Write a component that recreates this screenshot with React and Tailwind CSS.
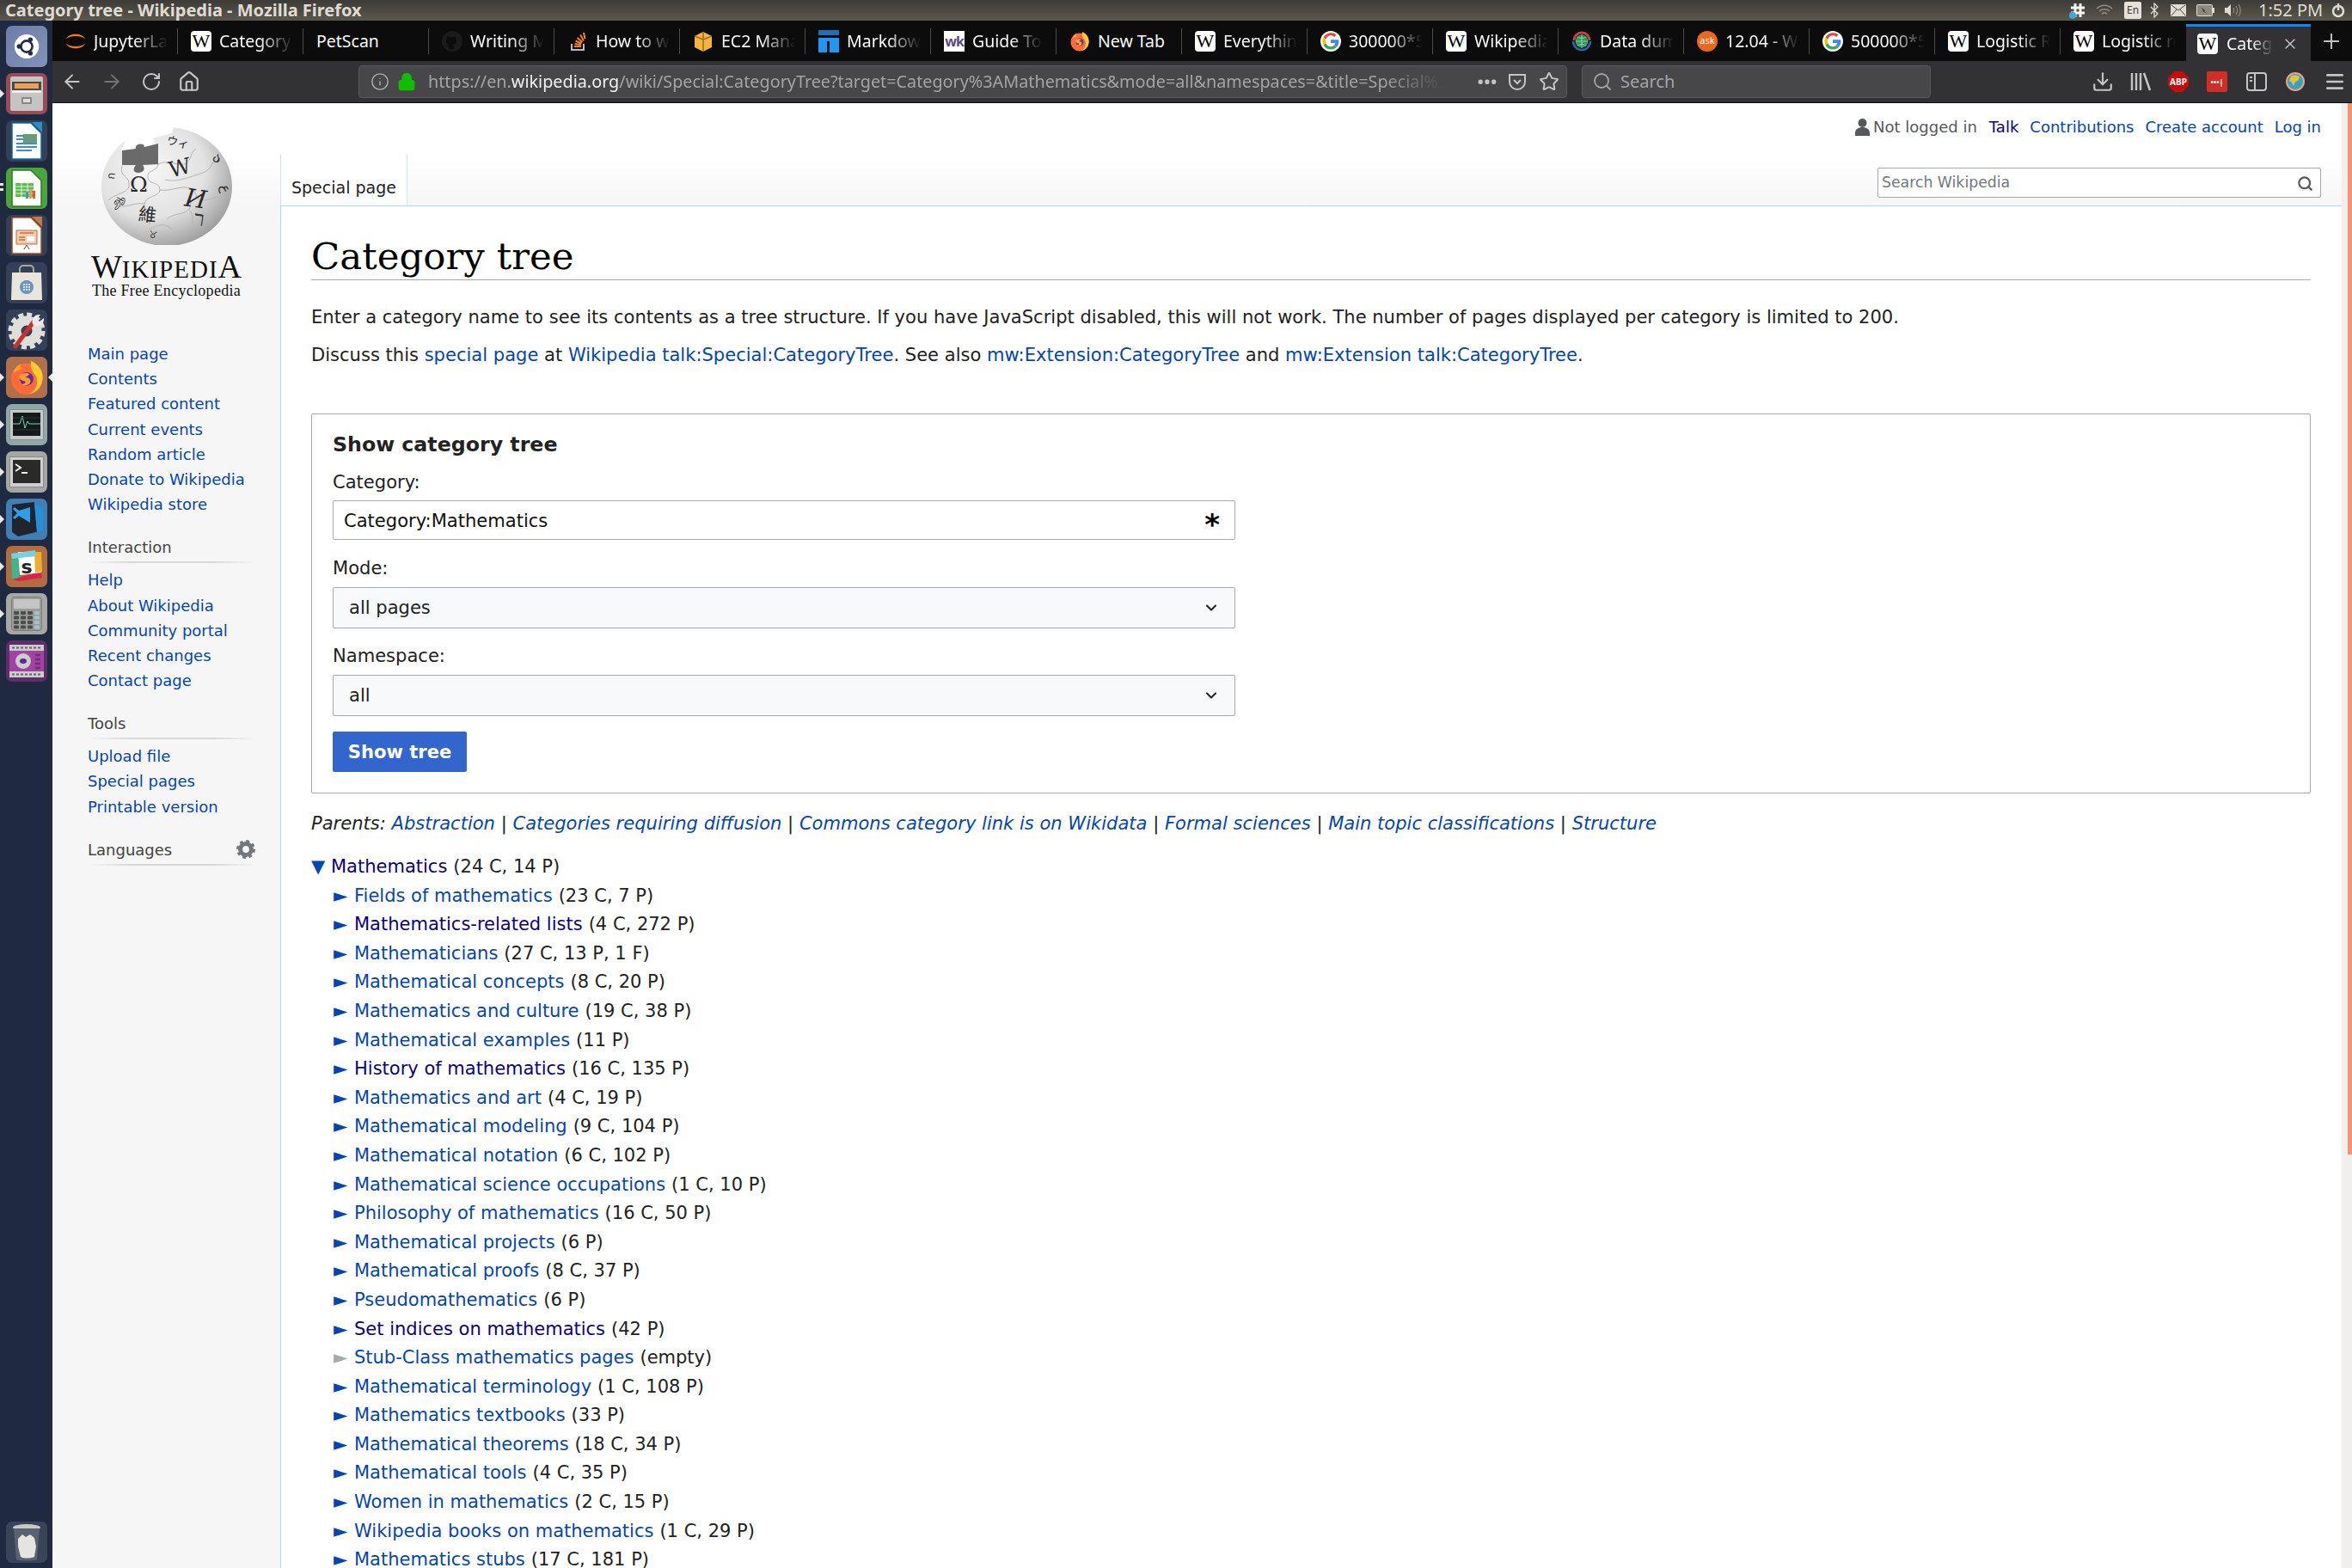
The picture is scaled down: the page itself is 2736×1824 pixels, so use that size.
import React from 'react';
import { ArrowLeft, ArrowRight, RotateCw, Home, Search, X, Plus, Menu, Star, ChevronDown, Info, Lock, Download } from 'lucide-react';

const WikiIcon = () => (
  <div className="w-6 h-6 shrink-0 rounded-[4px] bg-white flex items-center justify-center font-['Liberation_Serif',serif] text-[22px] leading-none text-black">W</div>
);

const GoogleIcon = () => (
  <svg width="24" height="24" viewBox="0 0 24 24" className="shrink-0">
    <circle cx="12" cy="12" r="12" fill="#fff" />
    <path d="M12 5.2c1.8 0 3.2.7 4.2 1.7l2.3-2.3A9.6 9.6 0 0 0 3.6 7.5l2.8 2.1A6 6 0 0 1 12 5.2z" fill="#ea4335" />
    <path d="M3.6 7.5a9.6 9.6 0 0 0 0 9l2.8-2.2a6 6 0 0 1 0-4.7z" fill="#fbbc05" />
    <path d="M12 21.6c2.6 0 4.8-.9 6.4-2.4l-2.7-2.1c-.9.6-2.2 1.1-3.7 1.1a6 6 0 0 1-5.6-3.9l-2.8 2.2a9.6 9.6 0 0 0 8.4 5.1z" fill="#34a853" />
    <path d="M21.4 12.2c0-.7-.1-1.3-.2-2H12v3.8h5.3c-.2 1.2-.9 2.3-1.6 3.1l2.7 2.1c1.9-1.7 3-4.2 3-7z" fill="#4285f4" />
  </svg>
);

const FirefoxIcon = ({ size = 24 }) => (
  <svg width={size} height={size} viewBox="0 0 24 24" className="shrink-0">
    <circle cx="12" cy="13" r="10.5" fill="#ff6a39" />
    <path d="M15 1c6 3 8.500 8 7.500 13-1 5-4 8-8.500 9 5-3 6-8 4-12-1-2-2.500-3-3-5-.3-1.500-.3-3.500 0-5z" fill="#ffcb2e" />
    <path d="M3 9c1-3 3-5 5-6-.5 1.500 0 2.500 1 3-2 1-4 2-6 3z" fill="#ffa030" />
    <circle cx="12" cy="13" r="4.500" fill="#5b2fa8" />
    <path d="M7 11c2-2 5-2.500 7-1l-3 2c2 0 4 1 3.500 3-.5 2.500-4 3-6 1.500 2 0 3-1 2.500-2-2 0-4-1.500-4-3.500z" fill="#ff9f2e" />
  </svg>
);

const JupyterIcon = () => (
  <svg width="24" height="24" viewBox="0 0 24 24" className="shrink-0">
    <path d="M1 9c3-7 19-7 22 0-5-4-17-4-22 0zM1 15c3 7 19 7 22 0-5 4-17 4-22 0z" fill="#f37726" />
  </svg>
);

const StackIcon = () => (
  <svg width="24" height="24" viewBox="0 0 24 24" className="shrink-0">
    <path d="M5 15v7h14v-7" fill="none" stroke="#bbb" strokeWidth="2" />
    <path d="M8 18h8M8.500 15l7.500 1M9.500 11.500l7 3M11.500 8l6 5M15 4.500l4 7M19 2l1.500 7" fill="none" stroke="#f48024" strokeWidth="2" />
  </svg>
);

const BoxIcon = () => (
  <svg width="24" height="24" viewBox="0 0 24 24" className="shrink-0">
    <path d="M2 6l10-5 10 5v13l-10 5-10-5z" fill="#f3b53f" />
    <path d="M12 1v23M2 6l10 4 10-4" fill="none" stroke="#9a6c1c" strokeWidth="1.500" />
  </svg>
);

const BlueTable = () => (
  <svg width="24" height="26" viewBox="0 0 24 26" className="shrink-0">
    <rect x="0" y="0" width="24" height="6" fill="#1d6fb8" />
    <rect x="0" y="9" width="24" height="4" fill="#2196f3" />
    <rect x="0" y="13" width="10" height="13" fill="#2196f3" />
    <rect x="13" y="13" width="11" height="13" fill="#2196f3" />
  </svg>
);

const WkIcon = () => (
  <div className="w-6 h-6 shrink-0 bg-white flex items-center justify-center text-[16px] font-bold text-[#5a4a7a] font-['Noto_Sans',sans-serif] tracking-[-1px]">wk</div>
);

const GithubIcon = () => (
  <svg width="24" height="24" viewBox="0 0 24 24" className="shrink-0">
    <circle cx="12" cy="12" r="12" fill="#1b1b1c" />
    <path d="M8 21v-3c-3 .5-3.500-1-4-2 2 .5 2.500 1.500 4 1.500.2-.8.5-1.300 1-1.500-3-.5-4-2-4-4.500 0-1.200.4-2 1-2.700-.2-.7-.2-1.700.2-2.500 1 0 1.800.5 2.500 1 1.600-.4 3-.4 4.600 0 .7-.5 1.500-1 2.500-1 .4.800.4 1.800.2 2.500.6.700 1 1.500 1 2.700 0 2.500-1 4-4 4.500.6.500 1 1.200 1 2.200V21z" fill="#0c0c0d" />
  </svg>
);

const WikimediaIcon = () => (
  <svg width="24" height="26" viewBox="0 0 24 26" className="shrink-0">
    <path d="M3 12a9 9 0 0 1 18 0" fill="none" stroke="#c8403a" strokeWidth="3" />
    <circle cx="12" cy="13" r="7.500" fill="#2f9a5e" />
    <path d="M5 13h14M12 5v16M7 8c3 2 7 2 10 0M7 18c3-2 7-2 10 0" stroke="#a4dcc0" strokeWidth="0.800" fill="none" />
    <path d="M2 13a10 10 0 0 0 20 0" fill="none" stroke="#2a6aa8" strokeWidth="2.500" />
  </svg>
);

const AskIcon = () => (
  <div className="relative w-6 h-6 shrink-0 rounded-full bg-[#e8681e] flex items-center justify-center text-[11px] text-white font-['Noto_Sans',sans-serif]">ask</div>
);

const tabs = [
  { title: 'JupyterLab', icon: <JupyterIcon /> },
  { title: 'Category tree', icon: <WikiIcon /> },
  { title: 'PetScan', short: true },
  { title: 'Writing Math', icon: <GithubIcon /> },
  { title: 'How to write', icon: <StackIcon /> },
  { title: 'EC2 Manage', icon: <BoxIcon /> },
  { title: 'Markdown', icon: <BlueTable /> },
  { title: 'Guide To', icon: <WkIcon /> },
  { title: 'New Tab', icon: <FirefoxIcon />, short: true },
  { title: 'Everything', icon: <WikiIcon /> },
  { title: '300000*500', icon: <GoogleIcon /> },
  { title: 'Wikipedia', icon: <WikiIcon /> },
  { title: 'Data dumps', icon: <WikimediaIcon /> },
  { title: '12.04 - What', icon: <AskIcon /> },
  { title: '500000*500', icon: <GoogleIcon /> },
  { title: 'Logistic Reg', icon: <WikiIcon /> },
  { title: 'Logistic reg', icon: <WikiIcon /> },
];

const Tile = ({ bg, children, pipLeft, pipRight, two }) => (
  <div className="relative w-[61px] h-12 shrink-0 flex justify-center">
    {pipLeft && (
      <div className="absolute left-0 top-[19px] w-0 h-0 border-y-[5px] border-y-transparent border-l-[5px] border-l-[#e8e8e8]" />
    )}
    {two && (
      <div className="absolute left-0 top-[18px] flex flex-col gap-[3px]">
        <div className="w-1 h-[3px] bg-[#e8e8e8]" />
        <div className="w-1 h-[3px] bg-[#e8e8e8]" />
      </div>
    )}
    {pipRight && (
      <div className="absolute right-0 top-[19px] w-0 h-0 border-y-[5px] border-y-transparent border-r-[5px] border-r-[#e8e8e8]" />
    )}
    <div className={`w-12 h-12 rounded-[7px] overflow-hidden flex items-center justify-center ${bg}`}>{children}</div>
  </div>
);

const Launcher = () => (
  <div className="w-[61px] h-full shrink-0 bg-[#1f2a41] flex flex-col gap-[7px] pt-[6px] pb-[6px]">
    <Tile bg="bg-[linear-gradient(135deg,#6b7da8,#8393b8)]">
      <svg width="30" height="30" viewBox="0 0 34 34">
        <circle cx="17" cy="17" r="16" fill="#fff" />
        <circle cx="17" cy="17" r="7.500" fill="none" stroke="#222d4a" strokeWidth="3" />
        <circle cx="7" cy="17" r="3" fill="#222d4a" />
        <circle cx="22" cy="8" r="3" fill="#222d4a" />
        <circle cx="22" cy="26" r="3" fill="#222d4a" />
      </svg>
    </Tile>
    <Tile bg="bg-[#9a4a58]" pipLeft>
      <svg width="40" height="44" viewBox="0 0 40 44">
        <rect x="1" y="2" width="38" height="40" rx="2" fill="#c4c4c2" />
        <rect x="3" y="8" width="34" height="12" fill="#4a4a48" />
        <rect x="6" y="10" width="28" height="6" fill="#f0a050" />
        <rect x="3" y="18" width="34" height="3" fill="#eee" />
        <rect x="14" y="26" width="12" height="8" rx="1" fill="#888" />
        <rect x="16" y="28" width="8" height="4" fill="#ddd" />
      </svg>
    </Tile>
    <Tile bg="bg-[#343f58]">
      <svg width="36" height="44" viewBox="0 0 36 44">
        <path d="M1 1h22l12 12v30H1z" fill="#fff" stroke="#0f6a9c" strokeWidth="1.500" />
        <path d="M24 0h12v12z" fill="#2f8fc4" />
        <path d="M6 16h8M6 20h24M6 25h24M6 29h24M6 33h18" stroke="#3f8fc0" strokeWidth="2" />
        <rect x="14" y="14" width="16" height="10" fill="#6a9a7a" />
      </svg>
    </Tile>
    <Tile bg="bg-[#4aa63c]" two>
      <svg width="36" height="44" viewBox="0 0 36 44">
        <path d="M1 1h22l12 12v30H1z" fill="#fff" stroke="#2a7a24" strokeWidth="1.500" />
        <rect x="5" y="16" width="21" height="16" fill="#5dbb50" />
        <path d="M5 20h21M5 24h21M5 28h21M12 16v16M19 16v16" stroke="#fff" strokeWidth="0.800" />
        <rect x="17" y="26" width="3" height="8" fill="#3a9ad4" />
        <rect x="21" y="23" width="3" height="11" fill="#e8a040" />
        <rect x="25" y="25" width="3" height="9" fill="#d45a3a" />
      </svg>
    </Tile>
    <Tile bg="bg-[#343f58]">
      <svg width="36" height="44" viewBox="0 0 36 44">
        <path d="M1 1h22l12 12v30H1z" fill="#fff" stroke="#a04a1c" strokeWidth="1.500" />
        <path d="M24 0h12v12z" fill="#c47a4a" />
        <rect x="6" y="16" width="24" height="16" fill="#f6cdb0" stroke="#c06a3a" />
        <path d="M10 19h16M9 24h7M9 27h7" stroke="#d0683a" strokeWidth="1.500" />
        <rect x="18" y="23" width="9" height="6" fill="#fff" />
        <path d="M18 33l-3 5M18 33l3 5" stroke="#555" strokeWidth="1" />
      </svg>
    </Tile>
    <Tile bg="bg-[#343f58]">
      <svg width="38" height="44" viewBox="0 0 38 44">
        <path d="M11 12V6a4 4 0 0 1 4-4h8a4 4 0 0 1 4 4v6" fill="none" stroke="#a8a89c" strokeWidth="2" />
        <path d="M2 10h34l1 32H1z" fill="#e8e6dc" />
        <circle cx="19" cy="27" r="8" fill="#6a94c4" />
        <path d="M15 24h2M18 24h2M21 24h2M15 27h2M18 27h2M21 27h2M15 30h2M18 30h2M21 30h2" stroke="#fff" strokeWidth="1.500" />
      </svg>
    </Tile>
    <Tile bg="bg-[#343f58]">
      <svg width="46" height="46" viewBox="0 0 46 46">
        <circle cx="23" cy="24" r="19" fill="none" stroke="#dededa" strokeWidth="5" strokeDasharray="6 3.900" />
        <circle cx="23" cy="24" r="12" fill="none" stroke="#dededa" strokeWidth="11" />
        <path d="M10 42L32 12" stroke="#c8322a" strokeWidth="5" strokeLinecap="round" />
        <path d="M30 16c-2-6 2-12 9-11l-4 5 3 3 5-4c1 6-5 11-11 9z" fill="#ececea" />
      </svg>
    </Tile>
    <Tile bg="bg-[#b0704c]" pipLeft pipRight>
      <FirefoxIcon size={42} />
    </Tile>
    <Tile bg="bg-[#8fa8a6]" pipLeft>
      <svg width="40" height="36" viewBox="0 0 40 36">
        <rect x="0.500" y="0.500" width="39" height="35" fill="#c4c8c6" stroke="#8a8e8c" />
        <rect x="4" y="4" width="32" height="27" fill="#141a1a" />
        <path d="M4 17h8l3-9 3 14 3-8 2 3h13" fill="none" stroke="#6ed8b0" strokeWidth="1" />
        <path d="M4 10h32M4 24h32" stroke="#2c3434" strokeWidth="1" />
      </svg>
    </Tile>
    <Tile bg="bg-[#a6a6a4]" pipLeft>
      <svg width="40" height="36" viewBox="0 0 40 36">
        <rect x="0.500" y="0.500" width="39" height="35" fill="#cfcfcd" stroke="#8a8a88" />
        <rect x="4" y="4" width="32" height="27" fill="#2a2a28" />
        <path d="M7 9l6 4-6 4" fill="none" stroke="#eee" strokeWidth="2" />
        <path d="M14 19h7" stroke="#eee" strokeWidth="2" />
      </svg>
    </Tile>
    <Tile bg="bg-[#3f7fb6]" pipLeft>
      <svg width="40" height="42" viewBox="0 0 40 42">
        <path d="M3 4l26-3 3 35-22 5-7-5z" fill="#20242c" />
        <path d="M29 3l10 5v26l-29 7 22-5z" fill="#2590d8" />
        <path d="M24 7v18L11 17l-5 4-2-2 5-5-5-5 2-2 5 4z" fill="#2b9fe8" />
      </svg>
    </Tile>
    <Tile bg="bg-[#b46b3e]" pipLeft>
      <svg width="38" height="38" viewBox="0 0 38 38">
        <path d="M1 4l8-2 2 34-9-2z" fill="#3fb58f" />
        <path d="M2 34l8 2 27-4-1-7z" fill="#d8234f" />
        <path d="M9 2l24 0 3 24-25 3z" fill="#fff" />
        <path d="M28 2l8 0 1 23-8 1z" fill="#eab02e" />
        <path d="M1 4l28-4 1 7-28 3z" fill="#7acfe0" />
        <text x="19" y="27" textAnchor="middle" fontSize="22" fontWeight="700" fill="#222" fontFamily="DejaVu Sans">s</text>
      </svg>
    </Tile>
    <Tile bg="bg-[#a6a8a6]" pipLeft>
      <svg width="36" height="40" viewBox="0 0 36 40">
        <rect x="0.500" y="0.500" width="35" height="39" rx="3" fill="#9a9c9a" stroke="#7a7c7a" />
        <rect x="3" y="3" width="30" height="11" fill="#c4c6c4" />
        {[0, 1, 2, 3].map(r => [0, 1, 2, 3].map(c => (
          <rect key={`${r}${c}`} x={3 + c * 8} y={17 + r * 5.500} width="6" height="4" rx="1" fill={c === 3 ? '#a8c0c8' : '#4c4e4c'} />
        )))}
      </svg>
    </Tile>
    <Tile bg="bg-[#5c2f68]">
      <svg width="40" height="38" viewBox="0 0 40 38">
        <rect x="0" y="0" width="40" height="38" rx="2" fill="#a044a4" />
        <rect x="0" y="0" width="40" height="7" fill="#ccc" />
        <rect x="0" y="31" width="40" height="7" fill="#ccc" />
        <path d="M3 3.500h34M3 34.500h34" stroke="#666" strokeWidth="2" strokeDasharray="3 2" />
        <circle cx="16" cy="19" r="9" fill="#ccc" />
        <ellipse cx="16" cy="19" rx="4" ry="3" fill="#5a2a9a" />
        <path d="M30 12h6M30 17h6M30 22h6M30 27h6" stroke="#7a2a7a" strokeWidth="2.500" />
      </svg>
    </Tile>
    <div className="mt-auto">
      <Tile bg="bg-[#3a4458]">
        <svg width="34" height="44" viewBox="0 0 34 44">
          <ellipse cx="17" cy="5" rx="16" ry="4" fill="#c8c8c4" />
          <path d="M2 6l3 36c4 2 20 2 24 0l3-36" fill="#5a6272" />
          <path d="M7 18l5-5 4 3 5-3 5 4 2 10-2 12c-5 2-12 2-16 0l-3-12z" fill="#e4e4e0" />
        </svg>
      </Tile>
    </div>
  </div>
);

const TopPanel = () => (
  <div className="h-6 shrink-0 bg-[linear-gradient(#3c3b37,#5a584e)] flex items-center justify-between pl-[6px] pr-[7px] text-[#dfdbd2] font-['Noto_Sans',sans-serif]">
    <span className="text-[20px] font-bold leading-6">Category tree - Wikipedia - Mozilla Firefox</span>
    <div className="flex items-center">
      <svg width="22" height="22" viewBox="0 0 22 22">
        <path d="M8 3v16M14 3v16M3 8h16M3 14h16" stroke="#f4f4f0" strokeWidth="3" />
        <circle cx="5" cy="17" r="4" fill="#39a7e4" />
      </svg>
      <svg width="22" height="16" viewBox="0 0 22 16" className="ml-[9px]">
        <path d="M2 6c5-5 13-5 18 0M5 9c3-3 9-3 12 0M8 12c2-1.500 4-1.500 6 0" fill="none" stroke="#8c8a80" strokeWidth="1.500" />
      </svg>
      <div className="ml-[12px] w-5 h-5 rounded-[2px] bg-[#e6e2da] text-[#3c3b37] text-[12px] leading-5 text-center">En</div>
      <svg width="10" height="18" viewBox="0 0 10 18" className="ml-[10px]">
        <path d="M1 5l8 8-4 4V1l4 4-8 8" fill="none" stroke="#dfdbd2" strokeWidth="1.300" />
      </svg>
      <svg width="18" height="14" viewBox="0 0 18 14" className="ml-[14px]">
        <rect width="18" height="14" rx="1" fill="#dfdbd2" />
        <path d="M1 1l8 6 8-6M1 13l6-7M17 13l-6-7" fill="none" stroke="#4a4942" strokeWidth="1" />
      </svg>
      <svg width="22" height="14" viewBox="0 0 22 14" className="ml-[12px]">
        <rect x="0.500" y="0.500" width="18" height="13" rx="1" fill="#8c8a80" stroke="#dfdbd2" />
        <rect x="19" y="4" width="2" height="6" fill="#dfdbd2" />
        <path d="M5 3l5 4-1 1 4 3-6-3 1-1z" fill="#35342f" />
      </svg>
      <svg width="20" height="16" viewBox="0 0 20 16" className="ml-[10px]">
        <path d="M1 5h3l4-4v14l-4-4H1z" fill="#dfdbd2" />
        <path d="M11 5c1 2 1 4 0 6M14 3c2 3 2 7 0 10M17 1c3 4 3 10 0 14" fill="none" stroke="#8c8a80" strokeWidth="1.200" />
      </svg>
      <span className="ml-[20px] text-[20px] leading-6 w-[78px] whitespace-nowrap">1:52 PM</span>
      <svg width="18" height="18" viewBox="0 0 18 18" className="ml-[6px]">
        <circle cx="9" cy="10" r="6" fill="none" stroke="#dfdbd2" strokeWidth="2.500" />
        <path d="M9 1v8" stroke="#dfdbd2" strokeWidth="2.500" />
      </svg>
    </div>
  </div>
);

const TabStrip = () => (
  <div className="h-[47px] shrink-0 bg-[#0c0c0d] flex font-['Noto_Sans',sans-serif] text-[19.500px] text-[#f9f9fa]">
    {tabs.map((t, i) => (
      <div key={i} className="w-[146px] shrink-0 h-full flex items-center">
        <div className="w-[145px] h-[47px] flex items-center pl-[15px] pr-[11px] gap-[9px] overflow-hidden">
          {t.icon}
          <span className={t.short ? 'whitespace-nowrap' : 'overflow-hidden whitespace-nowrap [mask-image:linear-gradient(to_right,#000_55%,transparent_100%)]'}>{t.title}</span>
        </div>
        {i < tabs.length - 1 && <div className="w-px h-[30px] bg-[#4a4a4c]" />}
      </div>
    ))}
    <div className="w-[145px] shrink-0 h-full flex flex-col justify-end">
      <div className="h-[43px] bg-[#323234] border-t-[3px] border-[#0a84ff] flex items-center pl-[13px] pr-[14px] gap-[10px]">
        <WikiIcon />
        <span className="flex-1 overflow-hidden whitespace-nowrap [mask-image:linear-gradient(to_right,#000_55%,transparent_100%)]">Category</span>
        <X size={20} strokeWidth={1.500} className="text-[#d0d0d2] shrink-0" />
      </div>
    </div>
    <div className="flex-1 flex items-center justify-center">
      <Plus size={28} strokeWidth={1.700} className="text-[#c0c0c2]" />
    </div>
  </div>
);

const Toolbar = () => (
  <div className="h-[49px] shrink-0 bg-[#323234] border-b border-[#0c0c0d] flex items-center font-['Noto_Sans',sans-serif]">
    <div className="w-[356px] shrink-0 flex items-center pl-[10px] text-[#c4c4c6]">
      <ArrowLeft size={26} strokeWidth={1.800} />
      <ArrowRight size={26} strokeWidth={1.800} className="ml-5 text-[#737375]" />
      <RotateCw size={24} strokeWidth={2} className="ml-[21px]" />
      <Home size={26} strokeWidth={2} className="ml-[19px]" />
    </div>
    <div className="w-[1406px] shrink-0 h-[38px] bg-[#474749] border border-[#5a5a5c] rounded-[4px] flex items-center pl-[13px] pr-[8px] text-[#a4a4a6]">
      <Info size={22} strokeWidth={1.500} className="shrink-0 text-[#b4b4b6]" />
      <Lock size={22} strokeWidth={2.500} className="ml-[9px] shrink-0 text-[#12bc00] fill-[#12bc00]" />
      <div className="ml-[14px] w-[1180px] text-[19.800px] overflow-hidden whitespace-nowrap [mask-image:linear-gradient(to_right,#000_94%,transparent_100%)]">
        https://en.<span className="text-[#f0f0f2]">wikipedia.org</span>/wiki/Special:CategoryTree?target=Category%3AMathematics&amp;mode=all&amp;namespaces=&amp;title=Special%3
      </div>
      <span className="ml-auto text-[#c4c4c6] text-[18px] font-bold tracking-[1px] leading-none">•••</span>
      <svg width="22" height="22" viewBox="0 0 22 22" className="ml-[12px]">
        <path d="M2 3h18v8a9 9 0 0 1-18 0z" fill="none" stroke="#c4c4c6" strokeWidth="2" />
        <path d="M7 9l4 4 4-4" fill="none" stroke="#c4c4c6" strokeWidth="2" />
      </svg>
      <Star size={24} strokeWidth={2} className="ml-[14px] text-[#c4c4c6]" />
    </div>
    <div className="ml-[17px] w-[406px] shrink-0 h-[38px] bg-[#474749] border border-[#5a5a5c] rounded-[4px] flex items-center pl-[11px] text-[#a4a4a6] text-[20px]">
      <Search size={24} strokeWidth={1.800} />
      <span className="ml-[9px]">Search</span>
    </div>
    <div className="flex-1 flex items-center pl-[187px] text-[#c4c4c6]">
      <Download size={26} strokeWidth={2} className="shrink-0" />
      <svg width="24" height="24" viewBox="0 0 24 24" className="ml-[19px] shrink-0">
        <path d="M2 2v20M7 2v20M12 2v20M16 2l7 20" fill="none" stroke="#c4c4c6" strokeWidth="2.500" />
      </svg>
      <div className="ml-[20px] w-6 h-6 shrink-0 bg-[#c70d0d] [clip-path:polygon(30%_0,70%_0,100%_30%,100%_70%,70%_100%,30%_100%,0_70%,0_30%)] flex items-center justify-center text-[10px] font-bold text-white leading-none">ABP</div>
      <div className="ml-[21px] w-6 h-6 shrink-0 bg-[#d32d27] rounded-[2px] flex items-center justify-center text-white text-[9px] font-bold leading-none">•••|</div>
      <svg width="24" height="22" viewBox="0 0 24 22" className="ml-[22px] shrink-0">
        <rect x="1" y="1" width="22" height="20" rx="3" fill="none" stroke="#c4c4c6" strokeWidth="2" />
        <path d="M10 1v20M4 6h3M4 10h3" stroke="#c4c4c6" strokeWidth="2" />
      </svg>
      <svg width="24" height="24" viewBox="0 0 24 24" className="ml-[21px] shrink-0">
        <circle cx="12" cy="12" r="11" fill="#f0a080" />
        <circle cx="12" cy="12" r="9" fill="#3aa0c8" />
        <path d="M7 6c3-2 8-2 10 1l-2 4-3 1-2 5-2-4-3-2z" fill="#e8c43a" />
        <path d="M15 14l3-1-1 4z" fill="#3aa070" />
      </svg>
      <Menu size={26} strokeWidth={2.500} className="ml-[21px] shrink-0" />
    </div>
  </div>
);

const WikiGlobe = () => (
  <svg width="152" height="138" viewBox="0 0 152 138" className="shrink-0">
    <defs>
      <radialGradient id="globeFill" cx="38%" cy="35%" r="75%">
        <stop offset="0%" stopColor="#f6f6f6" />
        <stop offset="55%" stopColor="#e2e2e2" />
        <stop offset="100%" stopColor="#909090" />
      </radialGradient>
    </defs>
    <ellipse cx="76" cy="70" rx="76" ry="69" fill="url(#globeFill)" />
    <path d="M40 0C32 10 26 20 22 29L66 27 60 14 82 8 84 0z" fill="#fff" />
    <path d="M24 28L40 26C38 20 50 18 50 24L66 20 66 44 48 45C52 50 48 54 43 54 37 54 36 50 40 45L24 45z" fill="#6a6a6a" />
    <path d="M66 44c-2 10-14 6-12 16 1 8 14 4 14 14 0 8-16 6-18 16-1 8 8 14 6 24M66 44c12-6 20 2 30 0 10-3 6-14 14-18M74 62c14 4 30-4 44-8 6-2 10-8 14-16M68 74c14 2 24-6 36-2 8 4 4 14 14 14 8 0 14-6 26-4M24 46c-4 14 10 10 8 24-2 8-16 8-24 16M50 90c-14-2-20 6-34 2M76 108c8-8 20-4 26-12 4-6 0-12 2-18M102 96c6 6 2 16 8 24M56 120c8-6 20-8 26 0" fill="none" stroke="#b4b4b4" strokeWidth="1" />
    <g fontFamily="DejaVu Serif, serif" fill="#2a2a2a">
      <text x="33" y="76" fontSize="25">Ω</text>
      <text x="78" y="57" fontSize="25" transform="rotate(-14 90 47)">W</text>
      <text x="97" y="94" fontSize="29" fontStyle="italic" transform="rotate(8 108 84)">И</text>
      <text x="43" y="110" fontSize="21" fontFamily="Noto Sans CJK TC, sans-serif" transform="rotate(6 52 102)">維</text>
      <text x="76" y="22" fontSize="13" fontFamily="Noto Sans CJK JP, sans-serif" transform="rotate(14 84 18)">ウィ</text>
      <text x="108" y="115" fontSize="24" fill="#333" transform="rotate(8 112 108)">ר</text>
      <text x="130" y="42" fontSize="17" transform="rotate(24 134 36)">ა</text>
      <text x="142" y="78" fontSize="15" transform="rotate(80 146 72)">ع</text>
      <text x="6" y="60" fontSize="13" transform="rotate(-84 12 56)">ก</text>
      <text x="10" y="95" fontSize="14" transform="rotate(-60 16 90)">ஆ</text>
      <text x="56" y="130" fontSize="13" transform="rotate(12 60 126)">୪</text>
    </g>
  </svg>
);

const SideLink = ({ children }) => (
  <a className="block h-[29.200px] leading-[29.200px] text-[18px] text-[#0645ad] whitespace-nowrap">{children}</a>
);

const SideHeading = ({ children, gear }) => (
  <div className="relative h-[34px] w-[197px] text-[18px] leading-[32px] text-[#444]">
    {children}
    {gear && (
      <svg width="22" height="22" viewBox="0 0 24 24" className="absolute right-[2px] top-[4px]">
        <circle cx="12" cy="12" r="7" fill="none" stroke="#72777d" strokeWidth="5.500" />
        <circle cx="12" cy="12" r="10" fill="none" stroke="#72777d" strokeWidth="4" strokeDasharray="4 3.850" />
      </svg>
    )}
    <div className="absolute left-0 right-0 bottom-0 h-[2px] bg-[linear-gradient(to_right,#f6f6f6,#d8d8d8_25%,#d8d8d8_75%,#f6f6f6)]" />
  </div>
);

const Sidebar = () => (
  <div className="w-[265px] shrink-0 h-full bg-[linear-gradient(#fff_60px,#f6f6f6_120px)]">
    <div className="h-[262px] pt-[27px] flex flex-col items-center">
      <WikiGlobe />
      <div className="mt-[8px] font-['Liberation_Serif',serif] text-[#111] leading-[34px] h-[34px] whitespace-nowrap">
        <span className="text-[38px]">W</span><span className="text-[29px] tracking-[1px]">IKIPEDI</span><span className="text-[38px]">A</span>
      </div>
      <div className="font-['Liberation_Serif',serif] text-[18px] leading-[22px] text-[#111] whitespace-nowrap tracking-[0.3px]">The Free Encyclopedia</div>
    </div>
    <div className="pl-[41px] pt-[15px]">
      {['Main page', 'Contents', 'Featured content', 'Current events', 'Random article', 'Donate to Wikipedia', 'Wikipedia store'].map(l => <SideLink key={l}>{l}</SideLink>)}
      <div className="mt-[20px]"><SideHeading>Interaction</SideHeading></div>
      <div className="mt-[5px]">
        {['Help', 'About Wikipedia', 'Community portal', 'Recent changes', 'Contact page'].map(l => <SideLink key={l}>{l}</SideLink>)}
      </div>
      <div className="mt-[20px]"><SideHeading>Tools</SideHeading></div>
      <div className="mt-[5px]">
        {['Upload file', 'Special pages', 'Printable version'].map(l => <SideLink key={l}>{l}</SideLink>)}
      </div>
      <div className="mt-[20px]"><SideHeading gear>Languages</SideHeading></div>
    </div>
  </div>
);

const PageHead = () => (
  <div className="h-[120px] shrink-0 bg-[linear-gradient(#fff_60px,#f6f6f6_120px)] border-b border-[#a7d7f9] flex flex-col pr-[36px]">
    <div className="h-[51px] pt-[4px] flex justify-end items-center text-[18px] whitespace-nowrap">
      <svg width="17" height="21" viewBox="0 0 17 21" className="mr-[4px]">
        <circle cx="8.500" cy="6" r="5" fill="#54595d" />
        <path d="M0 21v-3c0-5 4-7 8.500-7s8.500 2 8.500 7v3z" fill="#54595d" />
      </svg>
      <span className="text-[#54595d]">Not logged in</span>
      <a className="ml-[14px] text-[#0b0080]">Talk</a>
      <a className="ml-[13px] text-[#0645ad]">Contributions</a>
      <a className="ml-[13px] text-[#0645ad]">Create account</a>
      <a className="ml-[13px] text-[#0645ad]">Log in</a>
    </div>
    <div className="flex-1 flex justify-between mr-[-36px]">
      <div className="w-[148px] mt-[9px] bg-white border-l border-r border-[#cfe6f7] flex items-center pl-[12px] text-[#222] text-[19px] h-[60px] pt-[19px]">Special page</div>
      <div className="mr-[36px] mt-[25px] w-[516px] h-[35px] bg-white border border-[#a2a9b1] rounded-[2px] flex items-center pl-[4px] pr-[8px] pt-[1px] text-[#72777d]">
        <span className="flex-1 text-[17.300px]">Search Wikipedia</span>
        <Search size={19} strokeWidth={2.800} className="text-[#54595d]" />
      </div>
    </div>
  </div>
);

const CategoryForm = () => (
  <div className="mt-[53px] border border-[#a2a9b1] rounded-[2px] pl-[24px] pt-[20px] pb-[23px] h-[442px]">
    <div className="text-[23.700px] leading-[30px] font-bold text-[#222]">Show category tree</div>
    <div className="mt-[14px] leading-[30px]">Category:</div>
    <div className="mt-[6px] w-[1050px] h-[46px] bg-white border border-[#a2a9b1] rounded-[2px] flex items-center pl-[12px] pr-[17px] pt-[1px] text-[#111]">
      <span className="flex-1">Category:Mathematics</span>
      <span className="text-[34px] leading-none font-bold text-black mt-[8px]">*</span>
    </div>
    <div className="mt-[18px] leading-[30px]">Mode:</div>
    <div className="mt-[7px] w-[1050px] h-[48px] bg-[#f8f9fa] border border-[#a2a9b1] rounded-[2px] flex items-center pl-[18px] pr-[17px] text-[#222]">
      <span className="flex-1">all pages</span>
      <ChevronDown size={20} strokeWidth={2.500} />
    </div>
    <div className="mt-[17px] leading-[30px]">Namespace:</div>
    <div className="mt-[7px] w-[1050px] h-[48px] bg-[#f8f9fa] border border-[#a2a9b1] rounded-[2px] flex items-center pl-[18px] pr-[17px] text-[#222]">
      <span className="flex-1">all</span>
      <ChevronDown size={20} strokeWidth={2.500} />
    </div>
    <button className="block mt-[18px] w-[156px] h-[47px] bg-[#3366cc] rounded-[2px] text-white font-bold">Show tree</button>
  </div>
);

const parents = ['Abstraction', 'Categories requiring diffusion', 'Commons category link is on Wikidata', 'Formal sciences', 'Main topic classifications', 'Structure'];

const treeRows = [
  ['Fields of mathematics', '(23 C, 7 P)'],
  ['Mathematics-related lists', '(4 C, 272 P)', 'visited'],
  ['Mathematicians', '(27 C, 13 P, 1 F)'],
  ['Mathematical concepts', '(8 C, 20 P)'],
  ['Mathematics and culture', '(19 C, 38 P)'],
  ['Mathematical examples', '(11 P)'],
  ['History of mathematics', '(16 C, 135 P)', 'visited'],
  ['Mathematics and art', '(4 C, 19 P)'],
  ['Mathematical modeling', '(9 C, 104 P)'],
  ['Mathematical notation', '(6 C, 102 P)'],
  ['Mathematical science occupations', '(1 C, 10 P)'],
  ['Philosophy of mathematics', '(16 C, 50 P)'],
  ['Mathematical projects', '(6 P)'],
  ['Mathematical proofs', '(8 C, 37 P)'],
  ['Pseudomathematics', '(6 P)'],
  ['Set indices on mathematics', '(42 P)', 'visited'],
  ['Stub-Class mathematics pages', '(empty)', 'empty'],
  ['Mathematical terminology', '(1 C, 108 P)'],
  ['Mathematics textbooks', '(33 P)'],
  ['Mathematical theorems', '(18 C, 34 P)'],
  ['Mathematical tools', '(4 C, 35 P)'],
  ['Women in mathematics', '(2 C, 15 P)'],
  ['Wikipedia books on mathematics', '(1 C, 29 P)'],
  ['Mathematics stubs', '(17 C, 181 P)'],
];

const CategoryTree = () => (
  <div className="mt-[19px] text-[21px]">
    <div className="h-[33.600px] leading-[33.600px] flex whitespace-nowrap">
      <span className="w-[23px] text-[#0645ad] text-[21px]">▼</span>
      <a className="text-[#0b0080]">Mathematics</a>
      <span className="ml-[7px]">(24 C, 14 P)</span>
    </div>
    {treeRows.map(([name, count, kind]) => (
      <div key={name} className="h-[33.600px] leading-[33.600px] flex pl-[26px] whitespace-nowrap">
        <span className={`w-[24px] text-[21px] ${kind === 'empty' ? 'text-[#aaaaaa]' : 'text-[#0645ad]'}`}>►</span>
        <a className={kind === 'visited' ? 'text-[#0b0080]' : 'text-[#0645ad]'}>{name}</a>
        <span className="ml-[7px]">{count}</span>
      </div>
    ))}
  </div>
);

const Content = () => (
  <div className="flex-1 border-l border-[#a7d7f9] pl-[35px] pr-[48px] text-[21.060px] text-[#222] overflow-hidden">
    <h1 className="h-[86px] pt-[34px] border-b border-[#a2a9b1] font-['DejaVu_Serif',serif] text-[43.500px] leading-[49px] text-black">Category tree</h1>
    <p className="mt-[28px] leading-[30px] whitespace-nowrap">Enter a category name to see its contents as a tree structure. If you have JavaScript disabled, this will not work. The number of pages displayed per category is limited to 200.</p>
    <p className="mt-[14px] leading-[30px] whitespace-nowrap">
      Discuss this <a className="text-[#0645ad]">special page</a> at <a className="text-[#0645ad]">Wikipedia talk:Special:CategoryTree</a>. See also <a className="text-[#0645ad]">mw:Extension:CategoryTree</a> and <a className="text-[#0645ad]">mw:Extension talk:CategoryTree</a>.
    </p>
    <CategoryForm />
    <div className="mt-[20px] leading-[30px] italic whitespace-nowrap">
      Parents:{' '}
      {parents.map((p, i) => (
        <span key={p}>
          {i > 0 && ' | '}
          <a className="text-[#0645ad]">{p}</a>
        </span>
      ))}
    </div>
    <CategoryTree />
  </div>
);

export default function App() {
  return (
    <div className="relative w-[2736px] h-[1824px] overflow-hidden flex flex-col bg-white font-['DejaVu_Sans',sans-serif]">
      <TopPanel />
      <div className="flex-1 min-h-0 flex">
        <Launcher />
        <div className="flex-1 min-w-0 flex flex-col">
          <TabStrip />
          <Toolbar />
          <div className="relative flex-1 min-h-0 flex overflow-hidden">
            <Sidebar />
            <div className="flex-1 min-w-0 flex flex-col">
              <PageHead />
              <Content />
            </div>
            {/* overlay scrollbar */}
            <div className="absolute right-0 top-0 bottom-0 w-3 bg-[#f0efee]">
              <div className="absolute right-0 top-0 w-[5px] h-[1223px] bg-[#f79370]" />
            </div>
          </div>
        </div>
      </div>
    </div>
  );
}
